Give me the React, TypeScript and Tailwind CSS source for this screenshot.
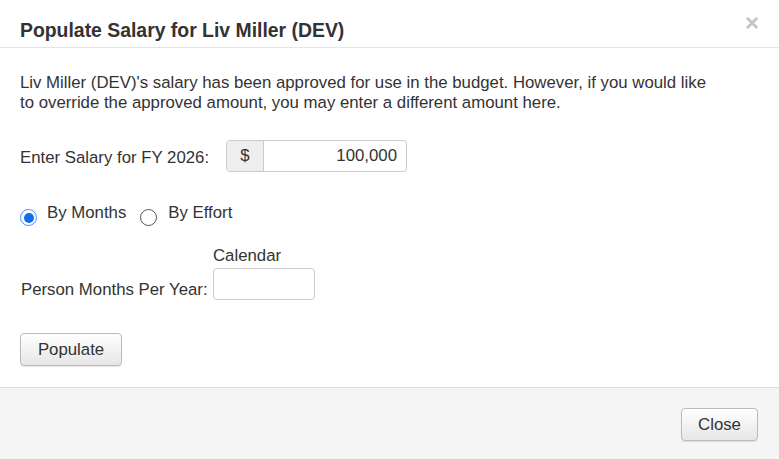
import React from "react";

export default function App() {
  return (
    <div className="w-[779px] h-[459px] bg-white flex flex-col text-[#333] overflow-hidden" style={{ fontFamily: '"Liberation Sans", Arial, sans-serif' }}>
      <div className="h-[48px] flex items-center justify-between pl-[20px] pr-[20px] border-b border-[#e5e5e5] shrink-0">
        <h1 className="text-[19.4px] font-bold text-[#333] mt-[14px] leading-none">Populate Salary for Liv Miller (DEV)</h1>
        <span className="text-[#c4c4c4] text-[24px] font-bold leading-none -mt-[2px]">×</span>
      </div>
      <div className="flex-1 px-[20px] pt-[25px] text-[16.8px]">
        <p className="leading-[20px] w-[720px]">Liv Miller (DEV)'s salary has been approved for use in the budget. However, if you would like<br />to override the approved amount, you may enter a different amount here.</p>
        <div className="flex items-center mt-[27px]">
          <span className="w-[206px] mt-[4px]">Enter Salary for FY 2026:</span>
          <div className="flex h-[32px] w-[181px] border border-[#ccc] rounded-[4px] overflow-hidden">
            <div className="w-[37px] bg-[#eee] border-r border-[#ccc] flex items-center justify-center">$</div>
            <div className="flex-1 flex items-center justify-end pr-[9px]">100,000</div>
          </div>
        </div>
        <div className="flex items-center mt-[29px] h-[24px]">
          <span className="w-[17px] h-[17px] rounded-full bg-white border-[1.5px] border-[#4a90f0] flex items-center justify-center mt-[9px]">
            <span className="w-[10px] h-[10px] rounded-full bg-[#0f6fec]"></span>
          </span>
          <span className="ml-[10px]">By Months</span>
          <span className="w-[17px] h-[17px] rounded-full bg-white border border-[#555] ml-[14px] mt-[9px]"></span>
          <span className="ml-[11px]">By Effort</span>
        </div>
        <div className="flex mt-[21px]">
          <span className="self-end mb-[-2px] ml-[1px] w-[192px]">Person Months Per Year:</span>
          <div className="flex flex-col">
            <span className="leading-[20px] ml-[0px]">Calendar</span>
            <div className="mt-[2px] w-[102px] h-[32px] border border-[#ccc] rounded-[4px]"></div>
          </div>
        </div>
        <button className="mt-[33px] w-[102px] h-[33px] border border-[#bbb] rounded-[4px] bg-gradient-to-b from-white to-[#e6e6e6] text-[16.8px] text-[#333] shadow-[0_1px_1px_rgba(0,0,0,0.1)]">Populate</button>
      </div>
      <div className="h-[72px] bg-[#f5f5f5] border-t border-[#ddd] flex items-center justify-end pr-[21px] shrink-0">
        <button className="w-[77px] h-[33px] mt-[2px] border border-[#bbb] rounded-[4px] bg-gradient-to-b from-white to-[#e6e6e6] text-[16.8px] text-[#333] shadow-[0_1px_1px_rgba(0,0,0,0.1)]">Close</button>
      </div>
    </div>
  );
}
